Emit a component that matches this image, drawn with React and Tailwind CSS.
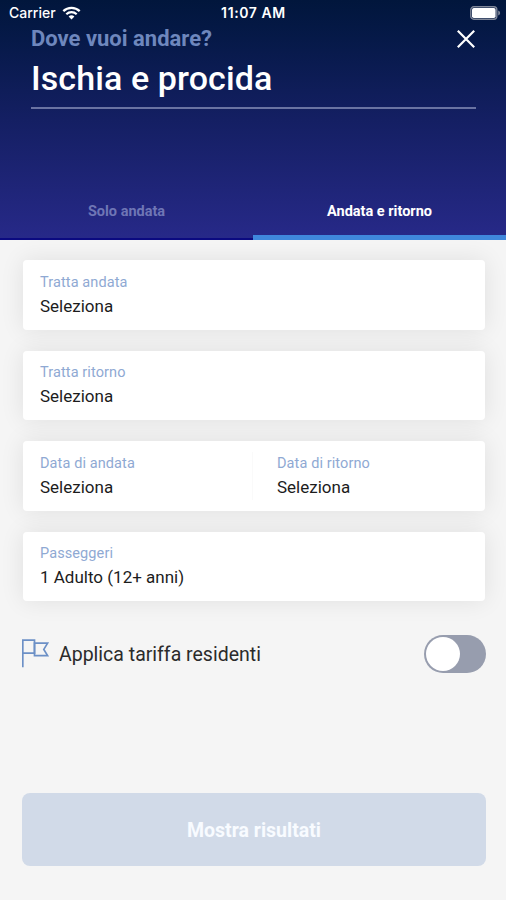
import React, { useState } from "react";

const routeFields = [
  { label: "Tratta andata", value: "Seleziona" },
  { label: "Tratta ritorno", value: "Seleziona" },
];

const tabs = ["Solo andata", "Andata e ritorno"];

const Field = ({ label, value }) => (
  <div className="flex-1 flex flex-col">
    <span className="text-[14.5px] leading-[20px] tracking-[0.1px] text-[#8fa9d3]">{label}</span>
    <span className="mt-px text-[17px] leading-[24px] text-[#1c1c1c]">{value}</span>
  </div>
);

const Card = ({ children }) => (
  <div className="flex h-[69.5px] rounded-[4px] bg-white px-[17px] pt-[12.5px] shadow-[0_0_24px_rgba(0,0,0,0.09)]">
    {children}
  </div>
);

const StatusBar = () => (
  <div className="grid grid-cols-3 items-center h-[26px] pl-[9px] pr-[5px] text-white">
    <div className="flex items-center gap-[6px]">
      <span className="-mt-px font-[Inter] text-[14px] font-medium">Carrier</span>
      <svg className="-mt-px" width="19" height="14" viewBox="0 0 19 14" fill="none">
        <path d="M1.3 5.1a12 12 0 0 1 16.4 0" stroke="white" strokeWidth="2.3" />
        <path d="M4.3 8.2a7.6 7.6 0 0 1 10.4 0" stroke="white" strokeWidth="2.2" />
        <path d="M9.5 13.6 6.6 10.6a4.2 4.2 0 0 1 5.8 0Z" fill="white" />
      </svg>
    </div>
    <span className="-mt-px -ml-[3px] text-center font-[Inter] text-[14px] font-semibold tracking-[0.6px] whitespace-nowrap">11:07 AM</span>
    <svg className="justify-self-end" width="31" height="14" viewBox="0 0 31 14" fill="none">
      <rect x="0.8" y="0.8" width="26" height="12.4" rx="3" stroke="#7f8799" strokeWidth="1.4" />
      <rect x="2" y="2" width="23.6" height="10" rx="1.8" fill="white" />
      <path d="M28.2 4.6c1.3.5 1.9 1.4 1.9 2.4s-.6 1.9-1.9 2.4Z" fill="#7f8799" />
    </svg>
  </div>
);

const App = () => {
  const [activeTab, setActiveTab] = useState(1);
  const [resident, setResident] = useState(false);

  return (
    <div className="flex flex-col h-[900px] w-full overflow-hidden bg-[#f5f5f5] font-[Roboto,sans-serif]">
      <header className="flex flex-col h-[240px] shrink-0 bg-gradient-to-b from-[#01163c] via-[#141f63] to-[#272989]">
        <StatusBar />

        <div className="ml-[31px] mr-[30px] flex flex-col">
          <div className="flex items-start justify-between">
            <span className="text-[22px] leading-[26px] font-bold text-[#6e87bd]">Dove vuoi andare?</span>
            <button className="mt-[3px]">
              <svg width="20" height="20" viewBox="0 0 20 20" stroke="white" strokeWidth="2.2">
                <path d="M1.8 1.8 18.2 18.2M18.2 1.8 1.8 18.2" />
              </svg>
            </button>
          </div>
          <h1 className="mt-[5px] h-[50px] text-[34px] leading-[42px] font-medium tracking-[0.1px] text-white">Ischia e procida</h1>
          <div className="h-[2px] bg-[#6a73a2]" />
        </div>

        <div className="mt-auto grid grid-cols-2">
          {tabs.map((tab, i) => (
            <button
              key={tab}
              onClick={() => setActiveTab(i)}
              className={`h-[58px] pt-[7px] text-[14.5px] font-bold ${
                i === activeTab
                  ? "border-b-[5px] border-[#3f87dc] text-white"
                  : "border-b-2 border-[#0b0a80] pb-[3px] text-[#6f76b5]"
              }`}
            >
              {tab}
            </button>
          ))}
        </div>
      </header>

      <main className="flex flex-1 flex-col pl-[22px] pr-[20px] pt-[20px]">
        <div className="flex flex-col gap-[21px] px-[1px]">
          {routeFields.map((f) => (
            <Card key={f.label}>
              <Field {...f} />
            </Card>
          ))}
          <Card>
            <Field label="Data di andata" value="Seleziona" />
            <div className="-mt-[2px] h-[48px] w-px bg-[#fafafa]" />
            <div className="flex w-[191px] shrink-0 ml-[24px]">
              <Field label="Data di ritorno" value="Seleziona" />
            </div>
          </Card>
          <Card>
            <Field label="Passeggeri" value="1 Adulto (12+ anni)" />
          </Card>
        </div>

        <div className="mt-[34px] flex h-[38px] items-center">
          <svg className="-mt-px" width="28" height="29" viewBox="0 0 28 29" fill="none" stroke="#6c90c6" strokeWidth="1.7">
            <path d="M0.8 28.2V1.2H12.5V14.2H0.8" />
            <path d="M12.5 4.2H25.6L21.8 10.4 25.6 16.6H12.5V4.2Z" />
          </svg>
          <span className="ml-[9px] pt-px text-[19.5px] text-[#2b2b2b]">Applica tariffa residenti</span>
          <button
            onClick={() => setResident(!resident)}
            className={`ml-auto flex h-[38px] w-[62px] items-center rounded-full p-[2px] ${
              resident ? "justify-end bg-[#3f87dc]" : "bg-[#979dae]"
            }`}
          >
            <span className="size-[34px] rounded-full bg-white" />
          </button>
        </div>

        <button className="mt-auto mb-[34px] h-[73px] rounded-[8px] bg-[#d1dae8] pt-[2px] text-[19.5px] font-bold text-[#f8fbff]">
          Mostra risultati
        </button>
      </main>
    </div>
  );
};

export default App;
